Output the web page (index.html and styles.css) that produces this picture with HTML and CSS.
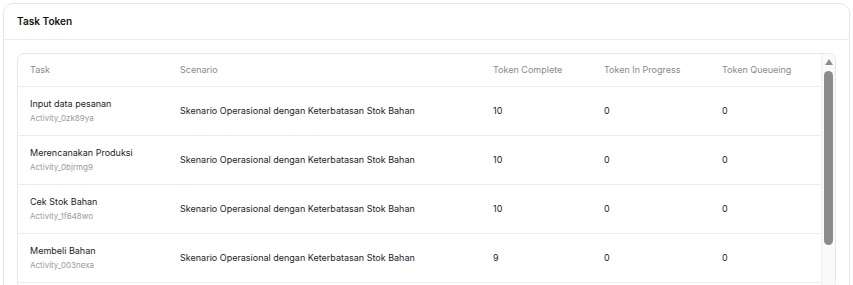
FILE: index.html
```html
<!DOCTYPE html>
<html lang="id">
<head>
<meta charset="utf-8">
<title>Task Token</title>
<link rel="stylesheet" href="styles.css">
</head>
<body>
<section class="card">
  <header class="card-head">Task Token</header>
  <div class="card-body">
    <div class="table-wrap">
      <div class="table-area">
        <table class="tbl">
          <colgroup>
            <col class="c-task"><col class="c-scn"><col class="c-done"><col class="c-prog"><col class="c-queue">
          </colgroup>
          <thead>
            <tr><th>Task</th><th>Scenario</th><th>Token Complete</th><th>Token In Progress</th><th>Token Queueing</th></tr>
          </thead>
          <tbody>
            <tr>
              <td><div class="t-name">Input data pesanan</div><div class="t-id">Activity_0zk89ya</div></td>
              <td>Skenario Operasional dengan Keterbatasan Stok Bahan</td><td>10</td><td>0</td><td>0</td>
            </tr>
            <tr>
              <td><div class="t-name">Merencanakan Produksi</div><div class="t-id">Activity_0bjrmg9</div></td>
              <td>Skenario Operasional dengan Keterbatasan Stok Bahan</td><td>10</td><td>0</td><td>0</td>
            </tr>
            <tr>
              <td><div class="t-name">Cek Stok Bahan</div><div class="t-id">Activity_1f648wo</div></td>
              <td>Skenario Operasional dengan Keterbatasan Stok Bahan</td><td>10</td><td>0</td><td>0</td>
            </tr>
            <tr>
              <td><div class="t-name">Membeli Bahan</div><div class="t-id">Activity_003nexa</div></td>
              <td>Skenario Operasional dengan Keterbatasan Stok Bahan</td><td>9</td><td>0</td><td>0</td>
            </tr>
          </tbody>
        </table>
      </div>
      <div class="scrollbar" aria-hidden="true">
        <span class="sb-arrow"></span>
        <span class="sb-thumb"></span>
      </div>
    </div>
  </div>
</section>
</body>
</html>
```
FILE: styles.css
```css
html, body {
  margin: 0;
  background: #ffffff;
}
body {
  padding: 3px;
  font-family: Inter, "Liberation Sans", sans-serif;
  color: #1f1f1f;
}
.card {
  border: 1px solid #e6e6e6;
  border-radius: 10px;
  background: #fff;
}
.card-head {
  height: 36px;
  box-sizing: border-box;
  padding: 11px 13px 0;
  font-size: 10.1px;
  font-weight: 600;
  color: #151515;
  border-bottom: 1px solid #ececec;
}
.card-body {
  padding: 13px 13px 14px;
}
.table-wrap {
  display: flex;
  border: 1px solid #e8e8e8;
  border-radius: 7px;
  height: 234px;
  overflow: hidden;
}
.table-area {
  flex: 1;
  min-width: 0;
}
.scrollbar {
  width: 14px;
  flex: none;
  box-sizing: border-box;
  background: #fafafa;
  border-left: 1px solid #f0f0f0;
  display: flex;
  flex-direction: column;
  align-items: center;
  padding-top: 5px;
}
.sb-arrow {
  width: 0;
  height: 0;
  border-left: 4px solid transparent;
  border-right: 4px solid transparent;
  border-bottom: 6px solid #8c8c8c;
  margin-bottom: 6px;
}
.sb-thumb {
  width: 9px;
  height: 174px;
  border-radius: 4.5px;
  background: #8c8c8c;
}
.tbl {
  width: 100%;
  border-collapse: collapse;
  table-layout: fixed;
  font-size: 9px;
}
.c-task { width: 150px; }
.c-scn { width: 313px; }
.c-done { width: 111px; }
.c-prog { width: 118px; }
.tbl th {
  height: 30px;
  text-align: left;
  font-weight: 400;
  color: #8a8a8a;
  padding: 0 0 2px 12px;
  border-bottom: 1px solid #ececec;
}
.tbl td {
  height: 46px;
  padding: 0 0 2px 12px;
  color: #222;
  border-bottom: 1px solid #ececec;
}
.t-name {
  line-height: 12px;
}
.t-id {
  margin-top: 3px;
  font-size: 8px;
  line-height: 10px;
  color: #9a9a9a;
}
```
